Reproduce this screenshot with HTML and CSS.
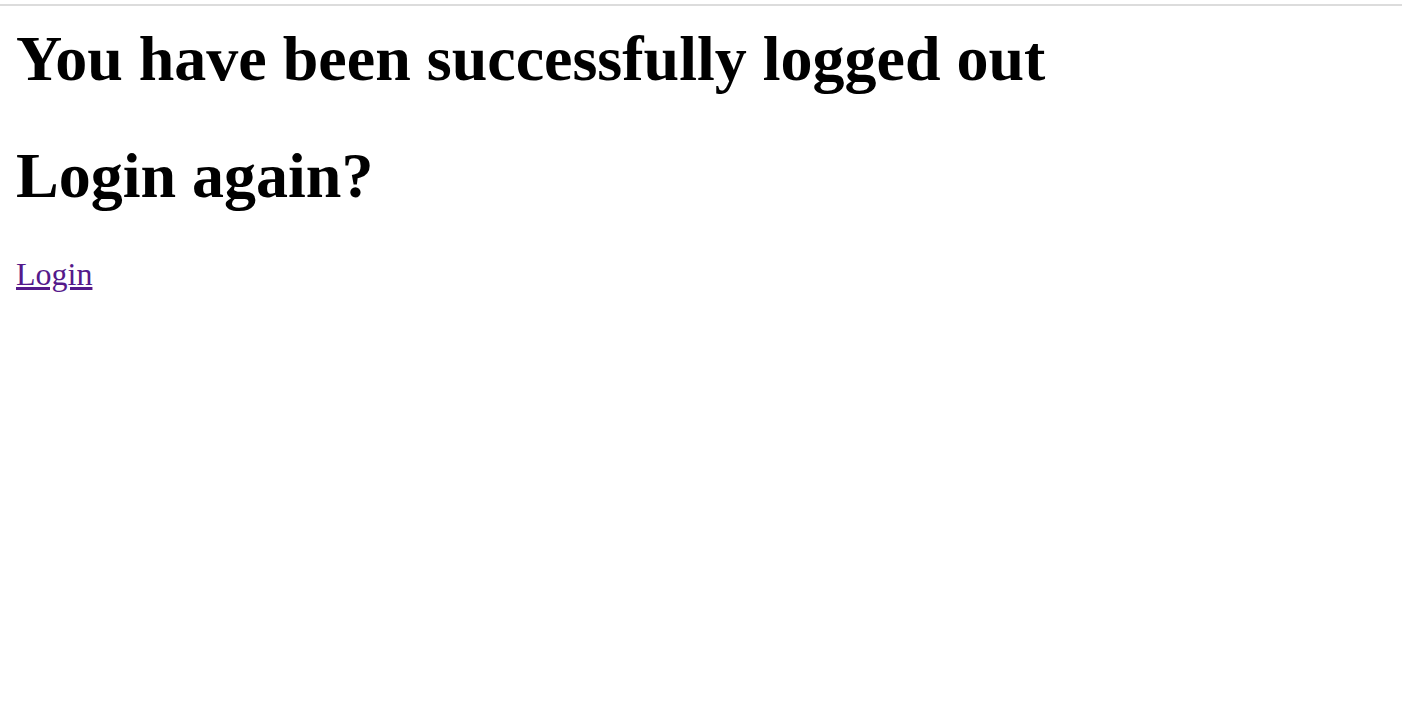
FILE: index.html
```html
<!DOCTYPE html>
<html>
<head>
<meta charset="utf-8">
<link rel="stylesheet" href="styles.css">
</head>
<body>
<div class="topbar"></div>
<main class="content">
<h1 class="title first">You have been successfully logged out</h1>
<h1 class="title">Login again?</h1>
<p class="links"><a class="login-link" href="#login">Login</a></p>
</main>
</body>
</html>
```
FILE: styles.css
```css
html, body {
  margin: 0;
  padding: 0;
  background: #fff;
}
body {
  font-family: "Liberation Serif", "Times New Roman", serif;
  color: #000;
}
.topbar {
  height: 4px;
  border-bottom: 2px solid #dcdcdc;
}
.content {
  padding: 0 16px;
}
.title {
  font-size: 64px;
  font-weight: bold;
  margin: 42.88px 0;
}
.title.first {
  margin-top: 16px;
}
.links {
  font-size: 32px;
  margin: 32px 0;
}
.login-link {
  color: #551a8b;
}
```
